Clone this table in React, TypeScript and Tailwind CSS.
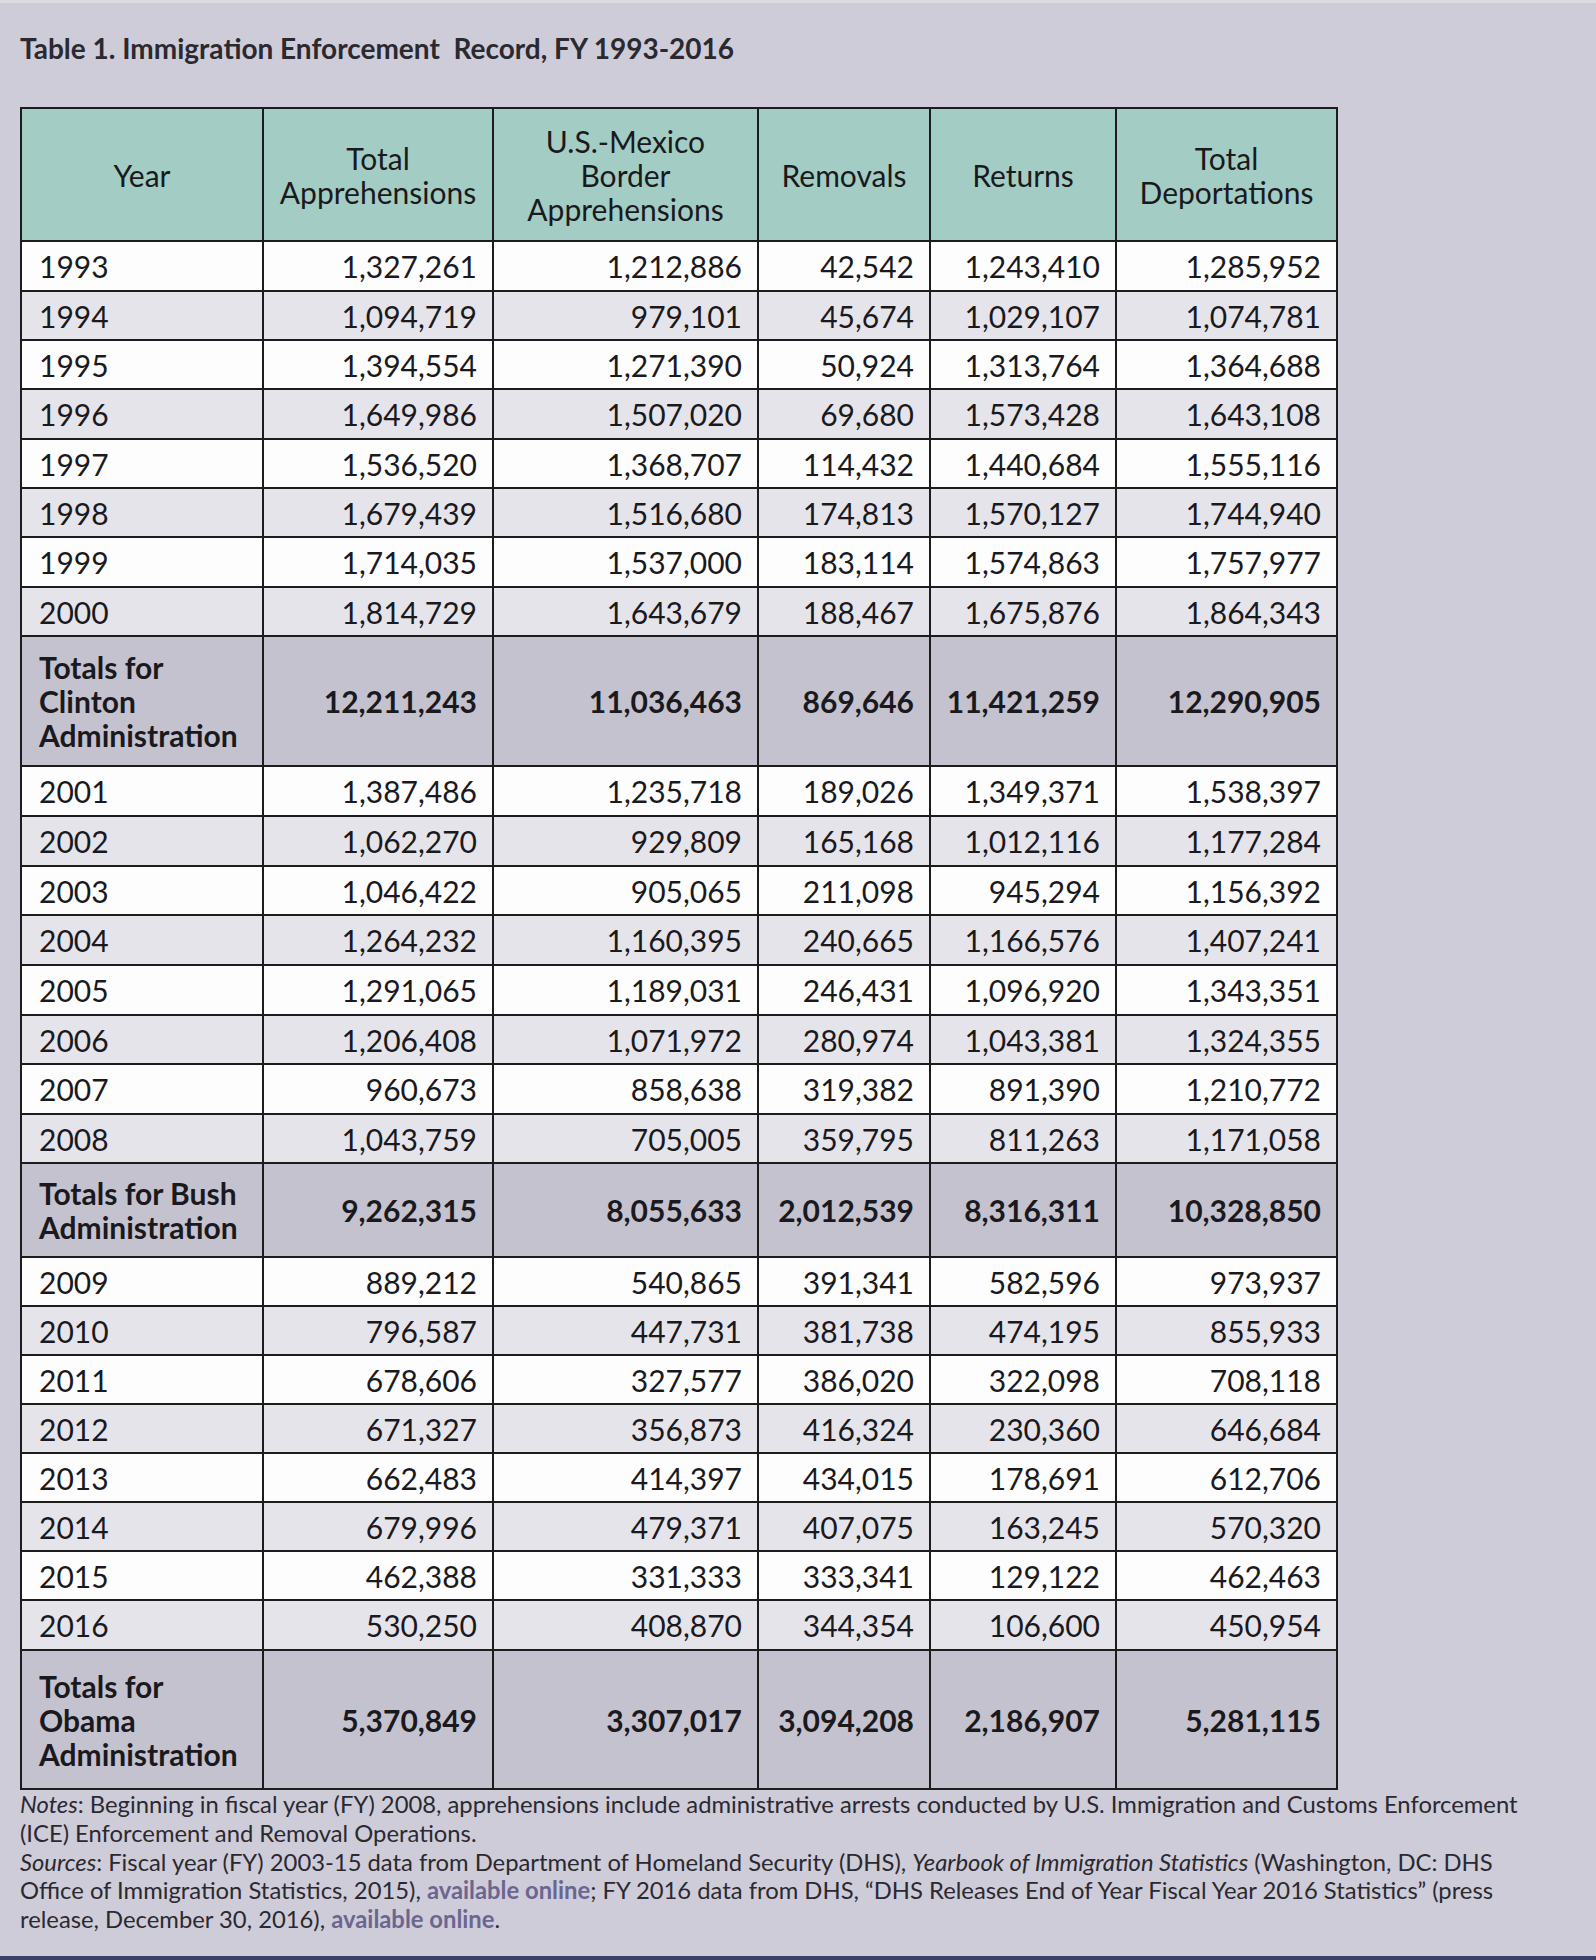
import React from "react";

type Row = string[];

const block1: Row[] = [
  ["1993", "1,327,261", "1,212,886", "42,542", "1,243,410", "1,285,952"],
  ["1994", "1,094,719", "979,101", "45,674", "1,029,107", "1,074,781"],
  ["1995", "1,394,554", "1,271,390", "50,924", "1,313,764", "1,364,688"],
  ["1996", "1,649,986", "1,507,020", "69,680", "1,573,428", "1,643,108"],
  ["1997", "1,536,520", "1,368,707", "114,432", "1,440,684", "1,555,116"],
  ["1998", "1,679,439", "1,516,680", "174,813", "1,570,127", "1,744,940"],
  ["1999", "1,714,035", "1,537,000", "183,114", "1,574,863", "1,757,977"],
  ["2000", "1,814,729", "1,643,679", "188,467", "1,675,876", "1,864,343"],
];
const block2: Row[] = [
  ["2001", "1,387,486", "1,235,718", "189,026", "1,349,371", "1,538,397"],
  ["2002", "1,062,270", "929,809", "165,168", "1,012,116", "1,177,284"],
  ["2003", "1,046,422", "905,065", "211,098", "945,294", "1,156,392"],
  ["2004", "1,264,232", "1,160,395", "240,665", "1,166,576", "1,407,241"],
  ["2005", "1,291,065", "1,189,031", "246,431", "1,096,920", "1,343,351"],
  ["2006", "1,206,408", "1,071,972", "280,974", "1,043,381", "1,324,355"],
  ["2007", "960,673", "858,638", "319,382", "891,390", "1,210,772"],
  ["2008", "1,043,759", "705,005", "359,795", "811,263", "1,171,058"],
];
const block3: Row[] = [
  ["2009", "889,212", "540,865", "391,341", "582,596", "973,937"],
  ["2010", "796,587", "447,731", "381,738", "474,195", "855,933"],
  ["2011", "678,606", "327,577", "386,020", "322,098", "708,118"],
  ["2012", "671,327", "356,873", "416,324", "230,360", "646,684"],
  ["2013", "662,483", "414,397", "434,015", "178,691", "612,706"],
  ["2014", "679,996", "479,371", "407,075", "163,245", "570,320"],
  ["2015", "462,388", "331,333", "333,341", "129,122", "462,463"],
  ["2016", "530,250", "408,870", "344,354", "106,600", "450,954"],
];

const h1 = [50, 49, 49, 50, 49, 49, 50, 49];
const h2 = [50, 50, 49, 50, 50, 49, 50, 49];
const h3 = [49, 49, 49, 49, 49, 49, 49, 50];

const cell = "border-2 border-[#1c1c1c] align-middle";

function DataRows({ rows, heights }: { rows: Row[]; heights: number[] }) {
  return (
    <>
      {rows.map((r, i) => (
        <tr key={r[0]} className={i % 2 === 0 ? "bg-[#fdfdfd]" : "bg-[#e6e4eb]"} style={{ height: heights[i] }}>
          {r.map((v, j) => (
            <td key={j} className={`${cell} ${j === 0 ? "pl-[17px] text-left" : "pr-[15px] text-right"}`}>
              {v}
            </td>
          ))}
        </tr>
      ))}
    </>
  );
}

function TotalRow({ label, values, height }: { label: React.ReactNode; values: string[]; height: number }) {
  return (
    <tr className="bg-[#c5c2cf] font-bold" style={{ height }}>
      <td className={`${cell} pl-[17px] text-left leading-[34px] whitespace-nowrap`}>{label}</td>
      {values.map((v, j) => (
        <td key={j} className={`${cell} pr-[15px] text-right`}>
          {v}
        </td>
      ))}
    </tr>
  );
}

export default function App() {
  return (
    <div className="flex h-[1960px] w-[1596px] flex-col bg-[#cfccd9] text-[#1a191d]" style={{ fontFamily: "Lato, 'Open Sans', sans-serif" }}>
      <div className="h-[3px] bg-[#dddbe2]" />
      <div className="flex-1 px-[20px]">
        <h1 className="mt-[28px] whitespace-pre text-[28px] font-bold leading-[34px] text-[#2a2930]">
          {"Table 1. Immigration Enforcement  Record, FY 1993-2016"}
        </h1>
        <table className="mt-[42px] w-[1316px] table-fixed border-collapse border-2 border-[#1c1c1c] text-[30px] leading-[34px]">
          <colgroup>
            <col className="w-[242px]" />
            <col className="w-[230px]" />
            <col className="w-[265px]" />
            <col className="w-[172px]" />
            <col className="w-[186px]" />
            <col className="w-[221px]" />
          </colgroup>
          <thead>
            <tr className="h-[133px] bg-[#a3cdc4] text-center text-[30px] leading-[34px]">
              <th className={`${cell} font-normal`}>Year</th>
              <th className={`${cell} font-normal`}>Total<br />Apprehensions</th>
              <th className={`${cell} font-normal`}>U.S.-Mexico<br />Border<br />Apprehensions</th>
              <th className={`${cell} font-normal`}>Removals</th>
              <th className={`${cell} font-normal`}>Returns</th>
              <th className={`${cell} font-normal`}>Total<br />Deportations</th>
            </tr>
          </thead>
          <tbody>
            <DataRows rows={block1} heights={h1} />
            <TotalRow
              height={130}
              label={<>Totals for<br />Clinton<br />Administration</>}
              values={["12,211,243", "11,036,463", "869,646", "11,421,259", "12,290,905"]}
            />
            <DataRows rows={block2} heights={h2} />
            <TotalRow
              height={94}
              label={<>Totals for Bush<br />Administration</>}
              values={["9,262,315", "8,055,633", "2,012,539", "8,316,311", "10,328,850"]}
            />
            <DataRows rows={block3} heights={h3} />
            <TotalRow
              height={139}
              label={<>Totals for<br />Obama<br />Administration</>}
              values={["5,370,849", "3,307,017", "3,094,208", "2,186,907", "5,281,115"]}
            />
          </tbody>
        </table>
        <p className="mt-0 w-[1540px] text-[23.8px] leading-[28.75px] text-[#2a2930]">
          <em>Notes</em>: Beginning in fiscal year (FY) 2008, apprehensions include administrative arrests conducted by U.S. Immigration and Customs Enforcement (ICE) Enforcement and Removal Operations.
          <br />
          <em>Sources</em>: Fiscal year (FY) 2003-15 data from Department of Homeland Security (DHS), <em>Yearbook of Immigration Statistics</em> (Washington, DC: DHS Office of Immigration Statistics, 2015), <span className="font-bold text-[#6b6690]">available online</span>; FY 2016 data from DHS, “DHS Releases End of Year Fiscal Year 2016 Statistics” (press release, December 30, 2016), <span className="font-bold text-[#6b6690]">available online</span>.
        </p>
      </div>
      <div className="h-[4px] bg-[#3c4066]" />
    </div>
  );
}
